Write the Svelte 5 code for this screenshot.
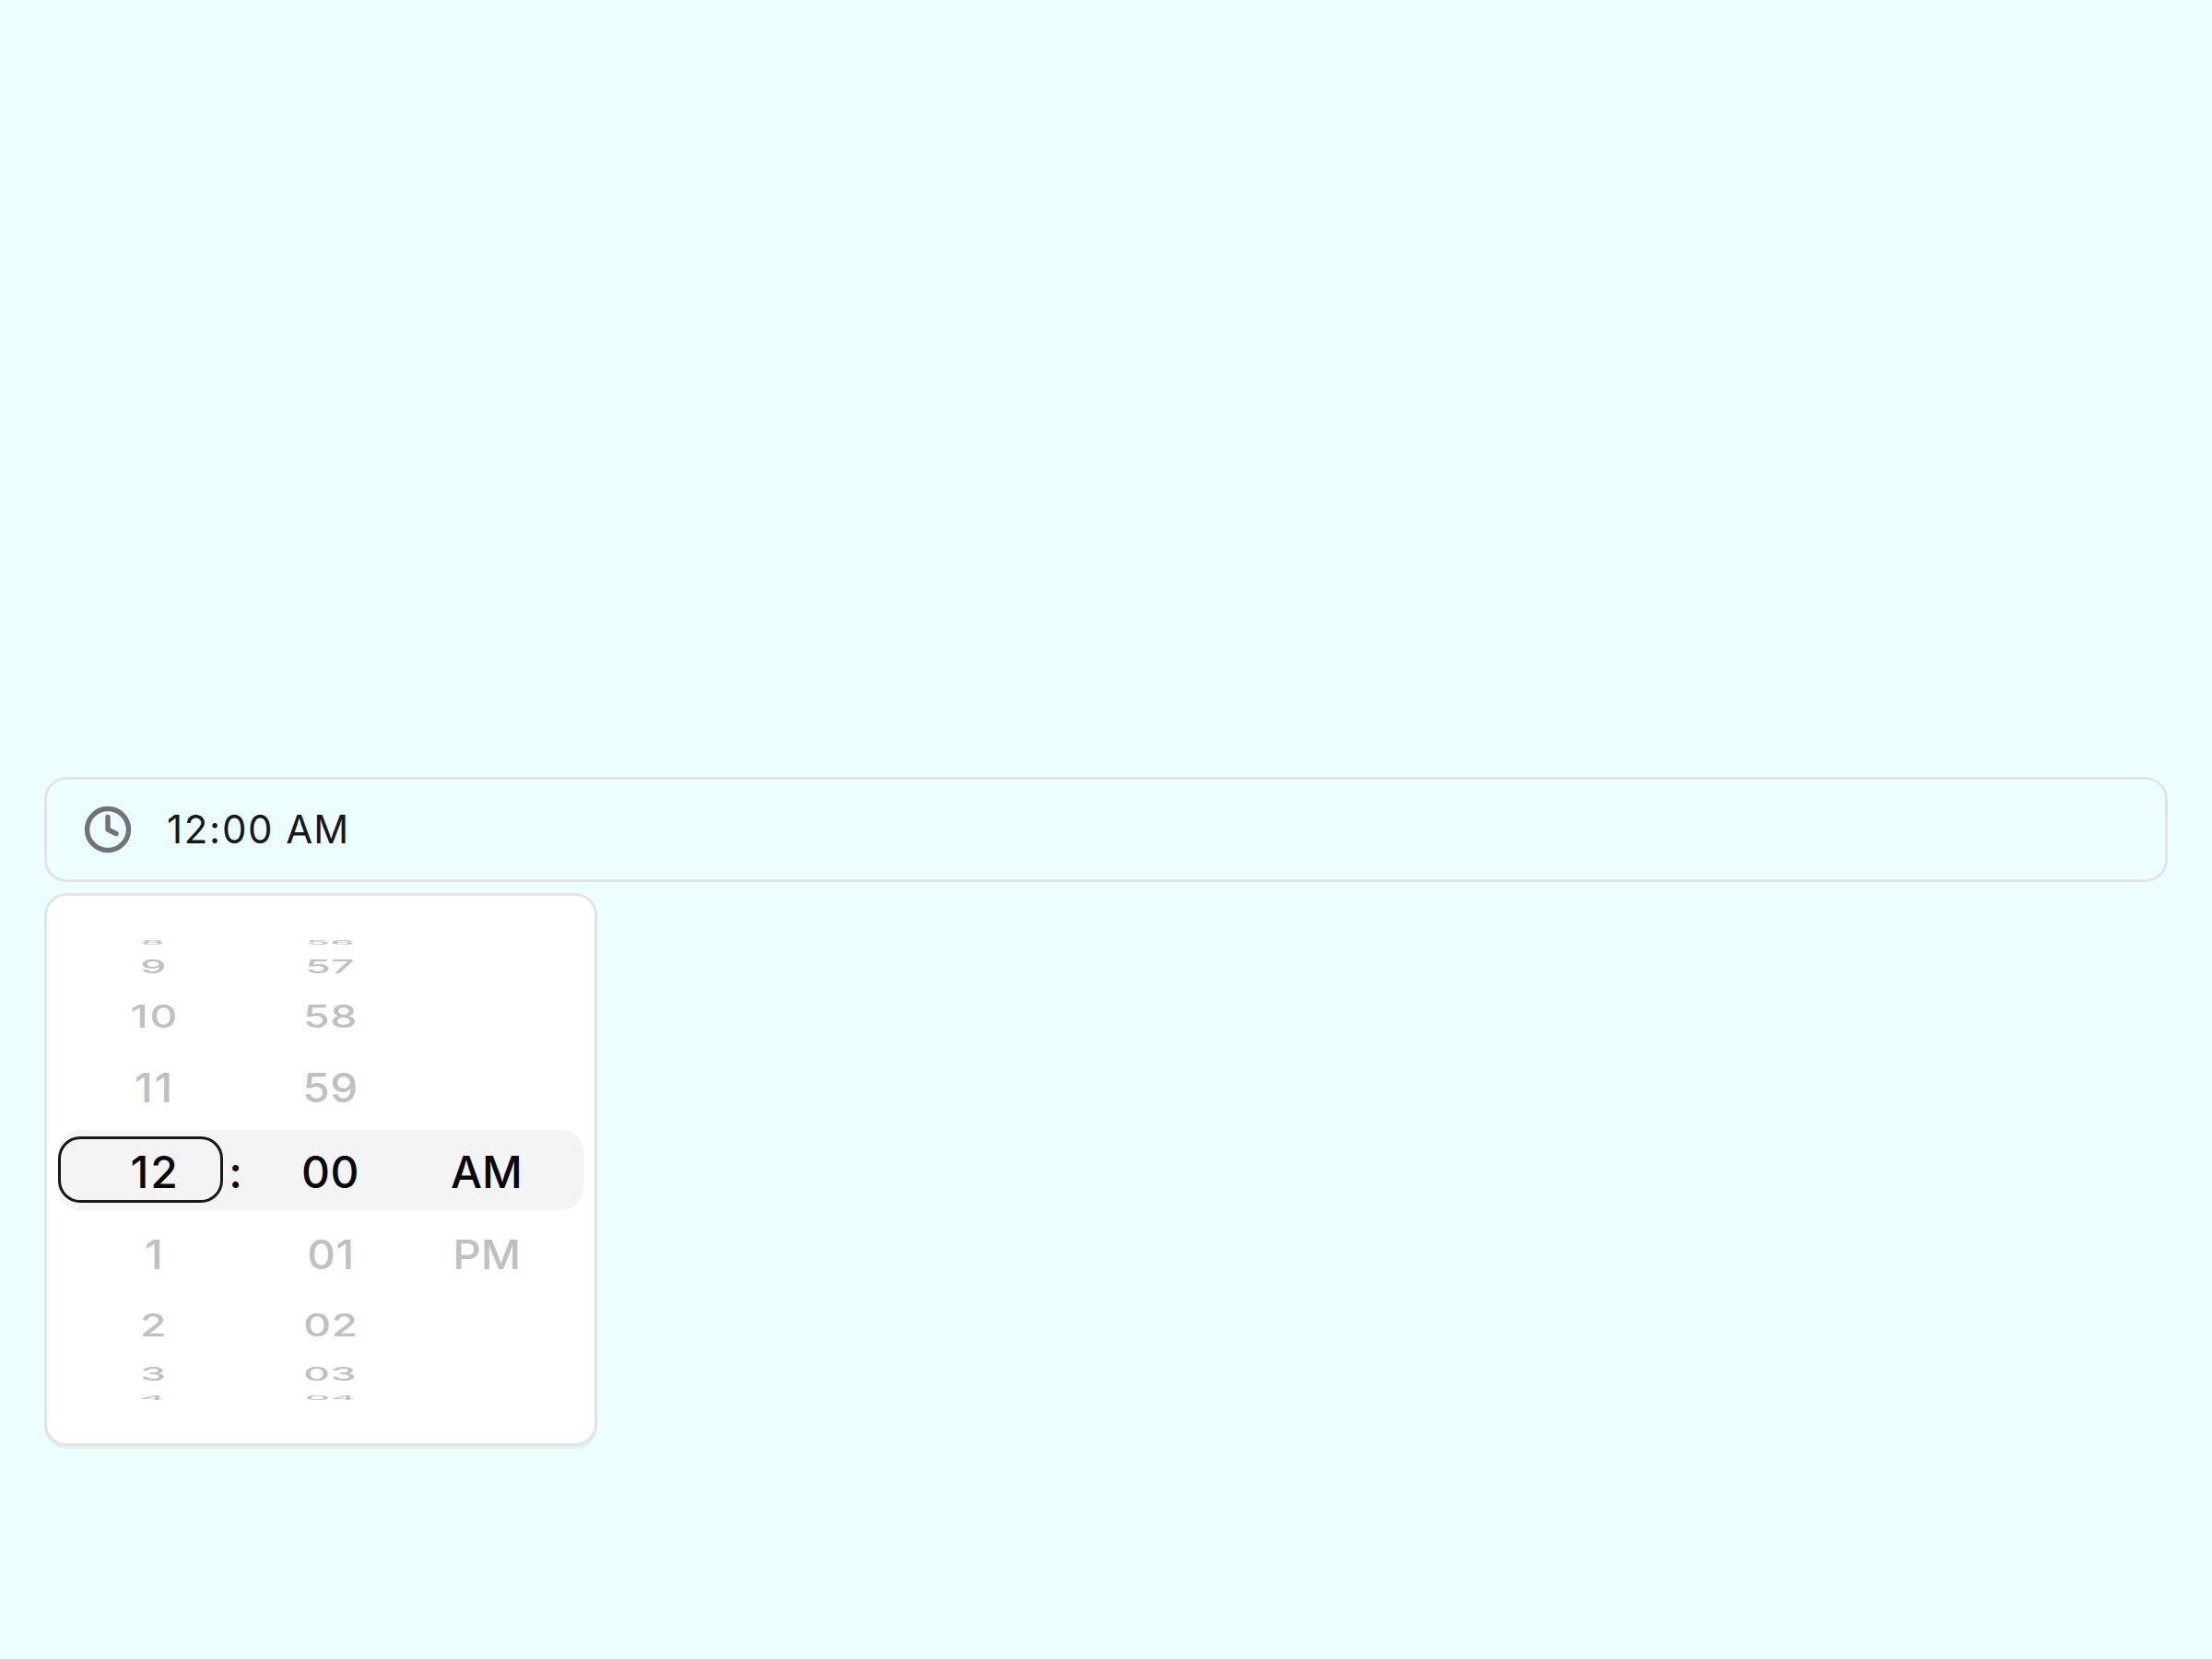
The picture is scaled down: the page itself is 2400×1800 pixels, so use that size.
<script lang="ts">
  const hours = ['8', '9', '10', '11', '12', '1', '2', '3', '4'];
  const minutes = ['56', '57', '58', '59', '00', '01', '02', '03', '04'];
  const periods = ['AM', 'PM'];

  // Geometry of the drum that the options are laid on.
  const step = Math.PI / 10;
  const radius = 295.4;
  const perspective = 1480;
  const textDrop = 1.8;

  // Projects an option `offset` steps from the selected one onto the screen.
  function project(offset: number) {
    const sin = Math.sin(offset * step);
    const cos = Math.cos(offset * step);
    const depth = 1 + (radius * (1 - cos)) / perspective;
    const y = (radius * sin + textDrop * cos) / depth;
    const sx = 1 / depth;
    const sy = cos / depth - (radius * sin * sin) / (perspective * depth * depth);
    return `translateY(${y.toFixed(2)}px) scale(${sx.toFixed(4)}, ${sy.toFixed(4)})`;
  }

  const columns = [
    { name: 'hour', selected: '12', items: hours },
    { name: 'minute', selected: '00', items: minutes },
    { name: 'period', selected: 'AM', items: periods }
  ].map((c) => ({
    ...c,
    options: c.items
      .map((label, i) => ({ label, offset: i - c.items.indexOf(c.selected) }))
      .filter((o) => o.offset !== 0)
  }));
</script>

<main class="page">
  <button class="field" type="button">
    <svg class="clock" viewBox="0 0 24 24" fill="none" stroke="currentColor" stroke-width="2.4" stroke-linecap="round" stroke-linejoin="round">
      <circle cx="12" cy="12" r="10" />
      <path d="M12 6v6l4 2" />
    </svg>
    <span class="value"><span class="digits">12:00</span> AM</span>
  </button>

  <div class="popup">
    <div class="band"></div>
    <div class="wheels">
      {#each columns as column}
        <div class="column {column.name}">
          {#each column.options as option}
            <span class="option" style:transform={project(option.offset)}>{option.label}</span>
          {/each}
          <span class="selected">{column.selected}</span>
        </div>
        {#if column.name === 'hour'}
          <span class="colon">:</span>
        {/if}
      {/each}
    </div>
  </div>
</main>

<style>
  :global(body) {
    background: #ecfeff;
  }
  .page {
    box-sizing: border-box;
    height: 1800px;
    padding: 843px 48px 0;
    display: flex;
    flex-direction: column;
    align-items: flex-start;
    gap: 12px;
    font-family: Inter, sans-serif;
    color: #18181b;
  }
  .field {
    box-sizing: border-box;
    width: 100%;
    height: 114px;
    display: flex;
    align-items: center;
    gap: 37px;
    padding: 0 39px 1px;
    border: 3px solid #e4e4e7;
    border-radius: 24px;
    background: none;
    font: 400 42px/60px Inter, sans-serif;
    font-variation-settings: 'opsz' 14;
    color: inherit;
  }
  .value {
    letter-spacing: 1.05px;
  }
  .digits {
    letter-spacing: 1.7px;
  }
  .clock {
    width: 54px;
    height: 54px;
    color: #71717a;
  }
  .popup {
    box-sizing: border-box;
    width: 600px;
    height: 600px;
    padding: 12px;
    display: grid;
    align-items: center;
    border: 3px solid #e4e4e7;
    border-radius: 24px;
    background: #fff;
    box-shadow: 0 3px 0 rgba(0, 0, 0, 0.05);
  }
  .band {
    grid-area: 1 / 1;
    height: 87px;
    border-radius: 24px;
    background: #f4f4f5;
  }
  .wheels {
    grid-area: 1 / 1;
    display: grid;
    grid-template-columns: 179px 27px 179px 160px;
    align-items: center;
    font-size: 48px;
    font-weight: 500;
    font-variation-settings: 'opsz' 16;
    line-height: 60px;
  }
  .column {
    height: 72px;
    display: grid;
    place-items: center;
  }
  .hour {
    box-sizing: border-box;
    padding-left: 31px;
    border-radius: 24px;
    box-shadow: inset 0 0 0 3px #18181b;
    letter-spacing: 1.8px;
  }
  .minute {
    letter-spacing: 0.5px;
  }
  .option,
  .selected {
    grid-area: 1 / 1;
    white-space: nowrap;
  }
  .option {
    color: #c0c0c0;
  }
  .hour .option {
    transform-origin: calc(50% - 14px) 50%;
  }
  .selected,
  .colon {
    padding-top: 5px;
    color: #09090b;
  }
  .colon {
    text-align: center;
  }
</style>
